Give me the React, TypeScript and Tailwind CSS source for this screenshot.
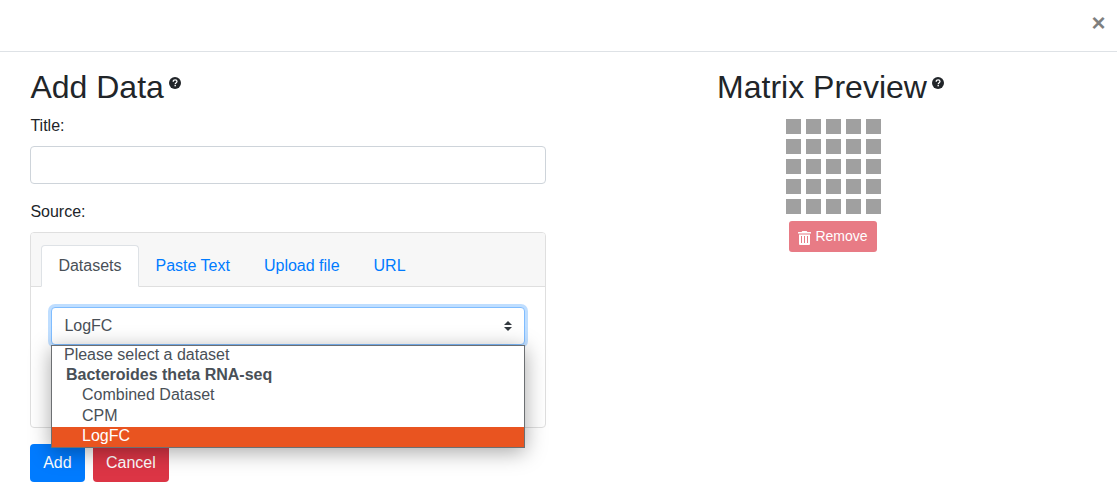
import React from "react";

const tabs = ["Paste Text", "Upload file", "URL"];
const cells = Array.from({ length: 25 }, (_, i) => i);

function HelpIcon() {
  return (
    <svg width="12" height="12" viewBox="0 0 12 12" className="mt-[9px]">
      <circle cx="6" cy="6" r="6" fill="currentColor" />
      <path
        d="M4.200 4.700C4.200 3.400 5 2.900 6.100 2.900S8 3.500 8 4.500C8 5.700 6.200 5.700 6.200 7.200"
        fill="none"
        stroke="white"
        strokeWidth="1.300"
      />
      <rect x="5.500" y="8" width="1.400" height="1.300" fill="white" />
    </svg>
  );
}

function Heading({ children }: { children: React.ReactNode }) {
  return (
    <h2 className="flex h-[38px] items-start gap-[5px] text-[32px] leading-[38px]">
      <span>{children}</span>
      <HelpIcon />
    </h2>
  );
}

function TrashIcon() {
  return (
    <svg width="13" height="15" viewBox="0 0 13 15" fill="currentColor" className="mt-[3px]">
      <path d="M3.800 0.700Q3.800 0 4.500 0H8.500Q9.200 0 9.200 0.700V1H12.500Q13 1 13 1.500V2.500H0V1.500Q0 1 0.500 1H3.800Z" />
      <path
        fillRule="evenodd"
        d="M1 3.500H12V13Q12 14 11 14H2Q1 14 1 13ZM3 5V12H4V5ZM6 5V12H7V5ZM9 5V12H10V5Z"
      />
    </svg>
  );
}

function DatasetSelect() {
  return (
    <div className="relative">
      <button className="flex h-[38px] w-full items-center justify-between rounded border border-[#80bdff] bg-white px-3 text-[#495057] shadow-[0_0_0_3px_rgba(0,123,255,0.25)]">
        <span>LogFC</span>
        <svg width="8" height="10" viewBox="0 0 8 10" fill="#343a40">
          <path d="M4 0L0 4h8zM4 10L0 6h8z" />
        </svg>
      </button>
      <div className="absolute top-[38px] right-0 left-0 z-10 h-[103px] border border-[#6c6f72] bg-white text-[#495057] shadow-[0_4px_20px_rgba(0,0,0,0.35)]">
        <div className="h-[20px] pl-[11.6px] leading-[18px]">Please select a dataset</div>
        <div className="h-[20px] pl-[13.6px] leading-[18px] font-bold">Bacteroides theta RNA-seq</div>
        <div className="h-[21px] pl-[29.6px] leading-[18px]">Combined Dataset</div>
        <div className="h-[20px] pl-[29.6px] leading-[18px]">CPM</div>
        <div className="h-[20px] bg-[#e95420] pl-[29.6px] leading-[18px] text-white">LogFC</div>
      </div>
    </div>
  );
}

export default function App() {
  return (
    <div className="h-[490px] overflow-hidden bg-white font-['Liberation_Sans',Arial,sans-serif] text-base text-[#212529]">
      <header className="flex h-[52px] justify-end border-b border-[#dee2e6] pt-[11px] pr-[11.5px]">
        <button className="h-6 text-2xl leading-6 font-bold text-black opacity-50">×</button>
      </header>
      <main className="flex pt-4 pl-[30.4px]">
        <section className="w-[515.6px] shrink-0">
          <Heading>Add Data</Heading>
          <label className="mt-2 block leading-6">Title:</label>
          <input className="mt-2 block h-[38px] w-full rounded border border-[#ced4da]" />
          <label className="mt-4 block leading-6">Source:</label>
          <div className="mt-2 h-[196px] rounded border border-[#dfdfdf]">
            <div className="flex h-[54px] items-end rounded-t-[3px] border-b border-[#dfdfdf] bg-[#f7f7f7] px-[10px]">
              <button className="-mb-px h-[42px] rounded-t border border-[#dee2e6] border-b-white bg-white px-4 text-[#495057]">
                Datasets
              </button>
              {tabs.map((tab) => (
                <button key={tab} className="-mb-px h-[42px] px-[17px] text-[#007bff]">
                  {tab}
                </button>
              ))}
            </div>
            <div className="p-5">
              <DatasetSelect />
            </div>
          </div>
          <div className="mt-4 flex gap-2">
            <button className="h-[38px] w-[55px] rounded bg-[#007bff] pr-px text-white">Add</button>
            <button className="h-[38px] w-[76px] rounded bg-[#dc3545] pr-px text-white">Cancel</button>
          </div>
        </section>
        <section className="ml-[30px] flex w-[509px] flex-col items-center">
          <Heading>Matrix Preview</Heading>
          <div className="mt-[13px] ml-[6px] grid grid-cols-5 gap-[5px]">
            {cells.map((cell) => (
              <div key={cell} className="size-[15px] bg-[#a0a0a0]" />
            ))}
          </div>
          <button className="mt-[7px] ml-[5px] flex h-[31px] w-[88px] items-center justify-center gap-1 rounded-[3px] bg-[#dc3545] text-sm text-white opacity-65">
            <TrashIcon />
            <span className="pb-0.5">Remove</span>
          </button>
        </section>
      </main>
    </div>
  );
}
